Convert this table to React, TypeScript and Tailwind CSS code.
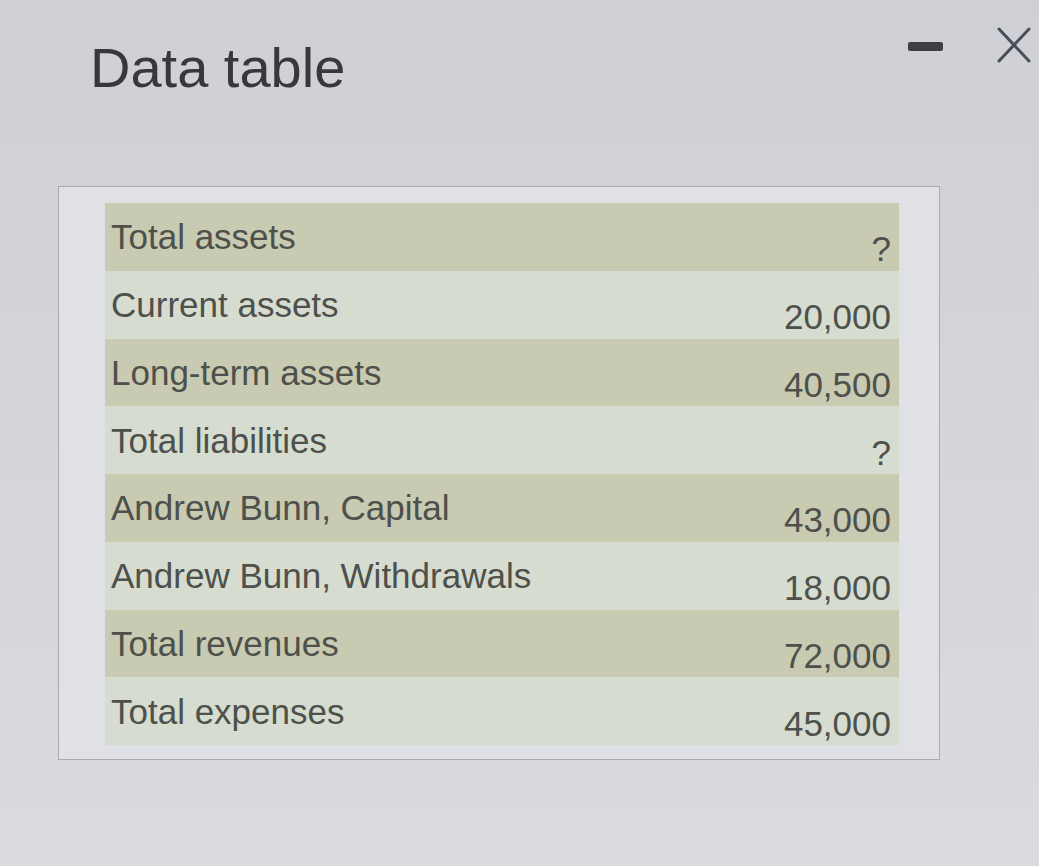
import React from "react";

const rows: { label: string; value: string; dark: boolean }[] = [
  { label: "Total assets", value: "?", dark: true },
  { label: "Current assets", value: "20,000", dark: false },
  { label: "Long-term assets", value: "40,500", dark: true },
  { label: "Total liabilities", value: "?", dark: false },
  { label: "Andrew Bunn, Capital", value: "43,000", dark: true },
  { label: "Andrew Bunn, Withdrawals", value: "18,000", dark: false },
  { label: "Total revenues", value: "72,000", dark: true },
  { label: "Total expenses", value: "45,000", dark: false },
];

export default function App() {
  return (
    <div className="w-[1039px] h-[866px] overflow-hidden bg-gradient-to-b from-[#cfd0d6] to-[#dadbde] font-['Liberation_Sans',Arial,sans-serif]">
      <div className="flex items-start justify-between pt-[40px] pl-[90px] pr-[7px]">
        <h1 className="text-[56px] leading-none text-[#37383c]">Data table</h1>
        <div className="flex items-start gap-[53px] -mt-[15px]">
          <div className="mt-[17px] w-[35px] h-[9px] rounded-[2px] bg-[#3e3f45]" />
          <svg width="36" height="40" viewBox="0 0 36 40" className="text-[#4c4e57]">
            <path d="M3 4 L33 36 M33 4 L3 36" stroke="currentColor" strokeWidth="3" strokeLinecap="round" fill="none" />
          </svg>
        </div>
      </div>

      <div className="ml-[58px] mt-[90px] w-[882px] h-[574px] border border-[#a9abaf] bg-[#dfe1e4] pl-[46px] pt-[16px]">
        <div className="w-[794px] flex flex-col">
          {rows.map((r) => (
            <div
              key={r.label}
              className={`h-[67.75px] flex items-center justify-between pl-[6px] pr-[8px] ${
                r.dark ? "bg-[#c8cab1]" : "bg-[#d6dccf]"
              }`}
            >
              <span className="text-[35px] leading-none text-[#4d504b]">{r.label}</span>
              <span className="pt-[24px] text-[35px] leading-none text-[#4d504b]">{r.value}</span>
            </div>
          ))}
        </div>
      </div>
    </div>
  );
}
